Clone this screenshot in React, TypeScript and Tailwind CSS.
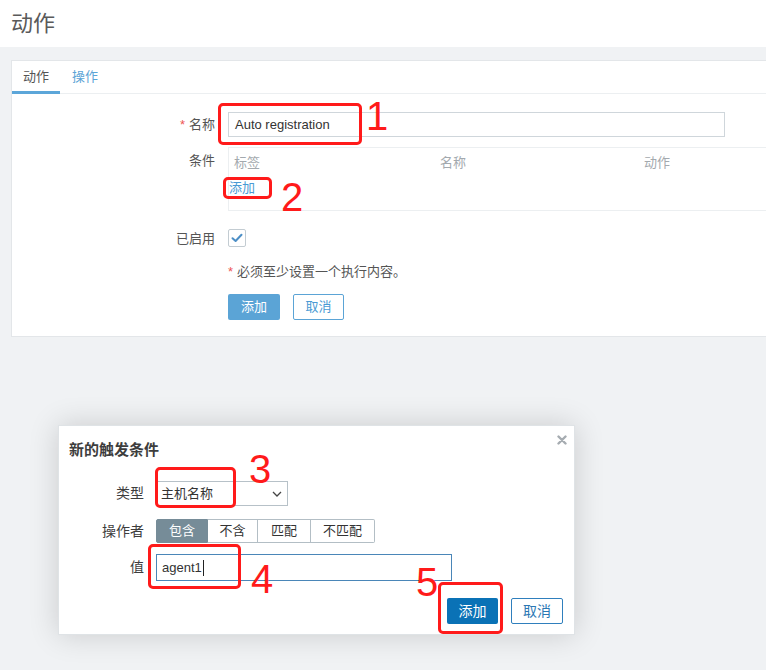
const font = "font-['Liberation_Sans','Noto_Sans_CJK_SC',sans-serif]"

const Mark = ({ className }: { className: string }) => (
  <div className={`absolute border-[3px] border-[#ff1a1a] rounded-[5px] ${className}`} />
)

const Num = ({ n, className }: { n: string; className: string }) => (
  <div className={`absolute text-[40px] leading-none text-[#ff1a1a] font-['Liberation_Sans',sans-serif] ${className}`}>{n}</div>
)

const App = () => {
  return (
    <div className={`relative w-[766px] h-[670px] overflow-hidden bg-[#f0f2f4] ${font}`}>
      {/* page header */}
      <div className="h-[47px] bg-white px-[11px] flex items-center">
        <h1 className="text-[22px] leading-[30px] text-[#5a5a5a]">动作</h1>
      </div>

      {/* main panel */}
      <div className="ml-[11px] mt-[13px] bg-white border border-r-0 border-[#e3e6e9]">
        <div className="flex h-[33px] border-b border-[#eceff1] text-[13px]">
          <div className="px-[11px] flex items-center text-[#555] border-b-[3px] border-[#5ca6d9] -mb-px pt-[2px]">动作</div>
          <div className="px-[12px] flex items-center text-[#5ba4d6]">操作</div>
        </div>

        <div className="grid grid-cols-[203px_1fr] gap-x-[13px] pt-[18px] pb-[16px] text-[13px] text-[#555]">
          <div className="flex items-center justify-end h-[25px]">
            <span className="text-[#e55] mr-[4px]">*</span>名称
          </div>
          <div className="h-[25px] w-[497px] border border-[#cfd6db] px-[6px] flex items-center text-[#333]">Auto registration</div>

          <div className="text-right pt-[15px] leading-[18px]">条件</div>
          <div className="mt-[10px] border-t border-b border-l border-[#eceff1] text-[13px]">
            <div className="h-[30px] flex items-center text-[#a3a9ae]">
              <div className="w-[211px] pl-[5px]">标签</div>
              <div className="w-[204px]">名称</div>
              <div>动作</div>
            </div>
            <div className="h-[32px] pt-[1px] leading-[18px] text-[#4a9ad4]">添加</div>
          </div>

          <div className="flex items-center justify-end h-[18px] mt-[19px]">已启用</div>
          <div className="mt-[18px] w-[18px] h-[18px] border border-[#c3ccd2] rounded-[2px] flex items-center justify-center">
            <svg width="12" height="10" viewBox="0 0 12 10" fill="none">
              <path d="M1.5 5.2 L4.6 8 L10.5 1.8" stroke="#4d8fc6" strokeWidth="2" strokeLinecap="round" strokeLinejoin="round" />
            </svg>
          </div>

          <div />
          <div className="mt-[15px] leading-[18px]">
            <span className="text-[#e55] mr-[4px]">*</span>必须至少设置一个执行内容。
          </div>

          <div />
          <div className="mt-[13px] flex gap-[13px]">
            <button className="w-[52px] h-[26px] bg-[#5ba4d6] text-white rounded-[2px]">添加</button>
            <button className="w-[51px] h-[26px] border border-[#5ba4d6] text-[#4a9ad4] bg-white rounded-[2px]">取消</button>
          </div>
        </div>
      </div>

      {/* dialog overlay */}
      <div className="absolute left-[58px] top-[425px] w-[517px] h-[210px] bg-white border border-[#dfe3e6] shadow-[0_0_28px_rgba(0,0,0,0.16)]">
        <svg className="absolute right-[7px] top-[9px]" width="10" height="10" viewBox="0 0 10 10">
          <path d="M1.5 1.5 L8.5 8.5 M8.5 1.5 L1.5 8.5" stroke="#a6acb1" strokeWidth="2.4" strokeLinecap="round" />
        </svg>
        <div className="px-[10px] pt-[14px] text-[15px] leading-[20px] font-bold text-[#3d3d3d]">新的触发条件</div>
        <div className="grid grid-cols-[75px_1fr] gap-x-[12px] px-[10px] text-[14px] text-[#3d3d3d]">
          <div className="flex items-center justify-end h-[25px] mt-[21px]">类型</div>
          <div className="mt-[21px] w-[132px] h-[25px] border border-[#b7c1c8] flex items-center justify-between pl-[4px] pr-[5px] text-[13px] text-[#333]">
            主机名称
            <svg width="10" height="6" viewBox="0 0 10 6" fill="none">
              <path d="M1 1 L5 5 L9 1" stroke="#444" strokeWidth="1.3" />
            </svg>
          </div>

          <div className="flex items-center justify-end h-[24px] mt-[13px]">操作者</div>
          <div className="mt-[13px] flex h-[24px] text-[13px]">
            <div className="w-[52px] flex items-center justify-center bg-[#768c98] text-white border border-[#768c98] rounded-l-[2px]">包含</div>
            <div className="w-[50px] flex items-center justify-center border border-l-0 border-[#b3bec5] text-[#333]">不含</div>
            <div className="w-[53px] flex items-center justify-center border border-l-0 border-[#b3bec5] text-[#333]">匹配</div>
            <div className="w-[64px] flex items-center justify-center border border-l-0 border-[#b3bec5] text-[#333] rounded-r-[2px]">不匹配</div>
          </div>

          <div className="flex items-center justify-end h-[27px] mt-[11px]">值</div>
          <div className="mt-[11px] w-[296px] h-[27px] border border-[#4a86b8] flex items-center px-[5px] text-[13px] text-[#333]">
            agent1<span className="inline-block w-px h-[16px] bg-[#222] ml-[1px]" />
          </div>
        </div>
        <div className="flex justify-end gap-[13px] pr-[11px] mt-[17px] text-[14px]">
          <button className="w-[51px] h-[26px] bg-[#0a72b6] text-white rounded-[2px]">添加</button>
          <button className="w-[52px] h-[26px] border border-[#2f7fbd] text-[#2b78b4] bg-white rounded-[2px]">取消</button>
        </div>
      </div>

      {/* red annotations */}
      <Mark className="left-[218px] top-[103px] w-[144px] h-[42px]" />
      <Num n="1" className="left-[366px] top-[96px]" />
      <Mark className="left-[223px] top-[177px] w-[49px] h-[22px]" />
      <Num n="2" className="left-[281px] top-[177px]" />
      <Mark className="left-[155px] top-[467px] w-[81px] h-[41px]" />
      <Num n="3" className="left-[249px] top-[449px]" />
      <Mark className="left-[148px] top-[544px] w-[93px] h-[45px]" />
      <Num n="4" className="left-[251px] top-[559px]" />
      <Mark className="left-[438px] top-[582px] w-[65px] h-[52px]" />
      <Num n="5" className="left-[416px] top-[562px]" />
    </div>
  )
}

export default App
